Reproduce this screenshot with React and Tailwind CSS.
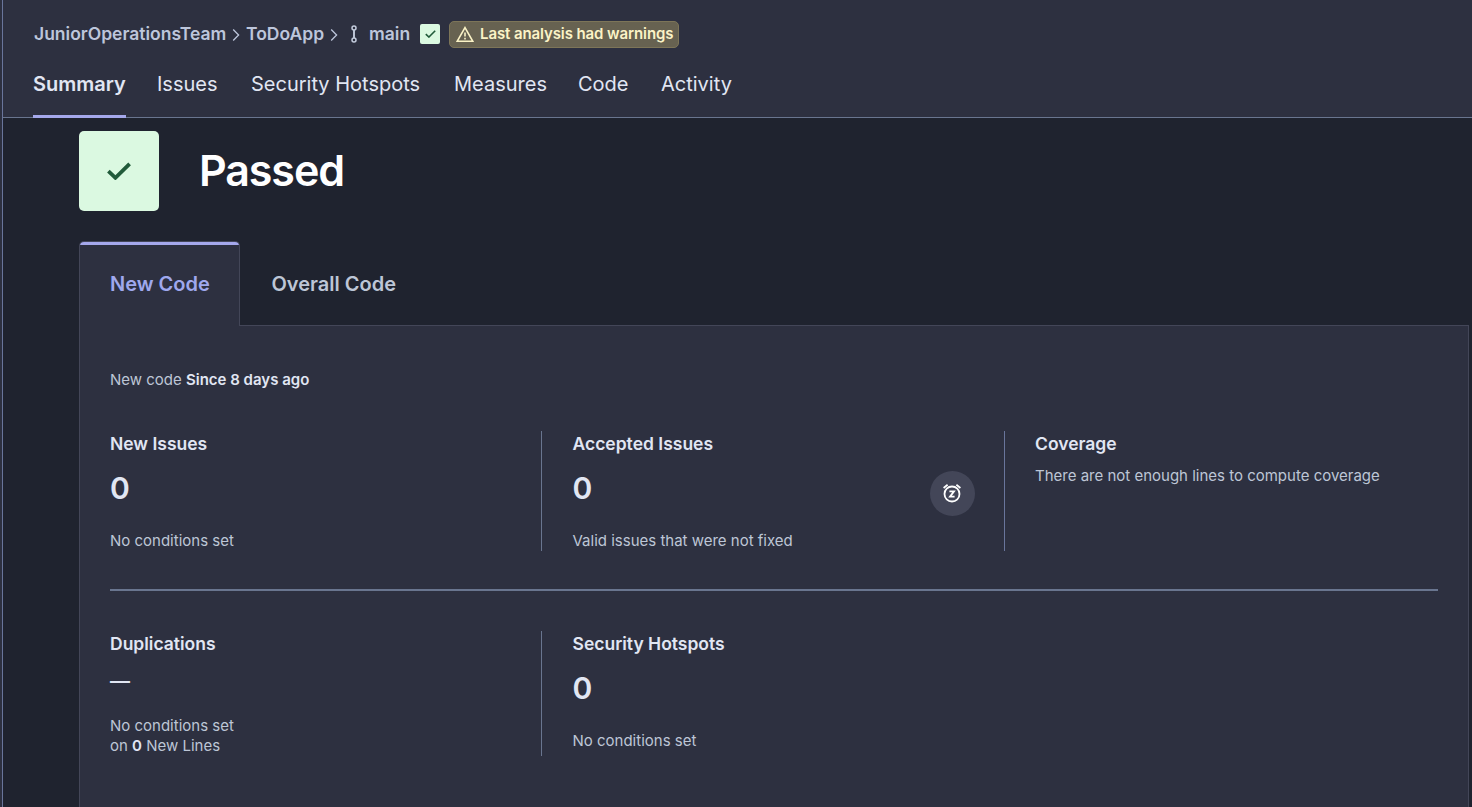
import React from "react";

const TABS = [
  { label: "Summary", cls: "w-[93px] mr-[31px] font-semibold border-[#a5a8ec]" },
  { label: "Issues", cls: "w-[61px] mr-[33px] border-transparent" },
  { label: "Security Hotspots", cls: "w-[170px] mr-[33px] border-transparent" },
  { label: "Measures", cls: "w-[93px] mr-[31px] border-transparent" },
  { label: "Code", cls: "w-[51px] mr-[32px] border-transparent" },
  { label: "Activity", cls: "w-[71px] border-transparent" },
];

function Chevron() {
  return (
    <svg className="h-[14px] w-[8px] shrink-0 mt-[2px]" viewBox="0 0 8 14" fill="none" stroke="#bdc6db" strokeWidth="1.3">
      <path d="M1.2 1.5 6.6 7 1.2 12.5" />
    </svg>
  );
}

function Branch() {
  return (
    <svg className="h-[18px] w-[8px] shrink-0" viewBox="0 0 8 18" fill="none" stroke="#c3cbdc" strokeWidth="1.5">
      <circle cx="4" cy="3" r="2" />
      <circle cx="4" cy="15" r="2" />
      <path d="M4 5v8" strokeWidth="1.9" />
    </svg>
  );
}

function Check({ className, width }) {
  return (
    <svg className={className} viewBox="0 0 24 18" fill="none" stroke="#215b3a" strokeWidth={width}>
      <path d="M1.4 9.2 8.4 15.8 22.6 1.8" />
    </svg>
  );
}

function Warning() {
  return (
    <svg className="h-[17px] w-[18px] shrink-0" viewBox="0 0 18 17" fill="none" stroke="#fbf3c6" strokeWidth="1.6">
      <path d="M9 1.7 16.7 15.2H1.3Z" />
      <path d="M9 6.6v4M9 11.8v1.6" />
    </svg>
  );
}

function Snooze() {
  return (
    <svg className="mb-px mr-px h-[20px] w-[20px]" viewBox="0 0 20 20" fill="none" stroke="#ffffff" strokeWidth="1.8">
      <circle cx="10" cy="11" r="7.5" />
      <path d="M1.6 5 5.6 1.8M18.4 5 14.4 1.8" />
      <path d="M7.4 8.4h4.6L8 13.6h4.6" />
    </svg>
  );
}

function Metric({ title, value, note }) {
  return (
    <div>
      <h3 className="text-[17.5px] leading-[25px] font-semibold">{title}</h3>
      <div className="mt-[15px] h-[35px] text-[30px] leading-[35px] font-semibold">{value}</div>
      <p className="mt-[25px] text-[15px] leading-5 text-[#bdc6d6]">{note}</p>
    </div>
  );
}

export default function App() {
  return (
    <div className="flex h-[807px] w-[1472px] overflow-hidden bg-[#1f232f] font-['Inter',sans-serif] text-[#e1e6f3]">
      <div className="w-[3px] shrink-0 border-r border-[#69759b] bg-[#2d3040]" />
      <div className="flex min-w-0 flex-1 flex-col">
        <header className="h-[118px] shrink-0 border-b border-[#69758f] bg-[#2d3040] pl-[30px]">
          <div className="flex h-[68px] items-center text-[17.5px] leading-[25px] font-semibold text-[#bdc6db]">
            <span className="-mt-[2px] w-[192px] whitespace-nowrap pl-px">JuniorOperationsTeam</span>
            <span className="ml-[7px] flex"><Chevron /></span>
            <span className="-mt-[2px] ml-[6px] w-[78px] whitespace-nowrap">ToDoApp</span>
            <span className="ml-[6px] flex"><Chevron /></span>
            <span className="ml-[12px] flex"><Branch /></span>
            <span className="-mt-[2px] ml-[11px] w-[41px]">main</span>
            <span className="ml-[10px] flex size-5 items-center justify-center rounded-[2px] bg-[#dbf9e1]">
              <Check className="h-[8px] w-[11px]" width={3.6} />
            </span>
            <span className="ml-[9px] flex h-[27px] w-[230px] items-center whitespace-nowrap rounded-[5px] border border-[#7d7558] bg-[#676251] pl-[6px] text-[15px] tracking-[-0.1px] text-[#fbf3c6]">
              <Warning />
              <span className="-mt-px ml-[6px]">Last analysis had warnings</span>
            </span>
          </div>
          <nav className="flex h-[50px] text-[20px] leading-[30px]">
            {TABS.map((t) => (
              <a key={t.label} className={"h-[50px] shrink-0 whitespace-nowrap border-b-[3px] pt-[1px] " + t.cls}>
                {t.label}
              </a>
            ))}
          </nav>
        </header>

        <main className="flex flex-1 flex-col pl-[76px] pr-[3px] pt-[13px]">
          <div className="flex h-20 items-center">
            <div className="flex size-20 items-center justify-center rounded-[5px] bg-[#dbf9e1]">
              <Check className="mb-px mr-px h-[18px] w-[24px]" width={3.8} />
            </div>
            <h1 className="-mt-[2px] ml-[40px] text-[43px] leading-[50px] font-semibold tracking-[-1.1px] text-white">Passed</h1>
          </div>

          <div className="mt-[30px] flex h-[85px] shrink-0">
            <div className="flex w-[161px] flex-col overflow-hidden rounded-t-[5px] border-x border-t border-[#434658] bg-[#2d3040]">
              <div className="h-[3px] shrink-0 bg-[#a5a8ec]" />
              <div className="flex h-[78px] items-center pl-[30px] text-[20px] font-semibold text-[#9fa8ee]">New Code</div>
            </div>
            <div className="flex flex-1 border-b border-[#434658] pl-[31.5px] pt-[28px] text-[20px] leading-[30px] font-semibold text-[#bdc6d6]">
              Overall Code
            </div>
          </div>

          <section className="flex-1 border-x border-[#434658] bg-[#2d3040] px-[30px] pt-[44px]">
            <p className="text-[15px] leading-5 text-[#bdc6d6]">
              New code <b className="font-semibold text-[#e1e6f3]">Since 8 days ago</b>
            </p>

            <div className="mt-[41px] flex h-[120px]">
              <div className="w-[432px] border-r border-[#69758f]">
                <Metric title="New Issues" value="0" note="No conditions set" />
              </div>
              <div className="flex w-[463px] justify-between border-r border-[#69759b] pl-[30.5px] pr-[29px]">
                <Metric title="Accepted Issues" value="0" note="Valid issues that were not fixed" />
                <div className="mt-[40px] flex size-[45px] items-center justify-center rounded-full bg-[#434658]">
                  <Snooze />
                </div>
              </div>
              <div className="pl-[30px]">
                <h3 className="text-[17.5px] leading-[25px] font-semibold">Coverage</h3>
                <p className="mt-[10px] text-[15px] leading-5 text-[#bdc6d6]">There are not enough lines to compute coverage</p>
              </div>
            </div>

            <div className="mt-[38px] h-[2px] bg-[#69758f]" />

            <div className="mt-[40px] flex h-[125px]">
              <div className="w-[432px] border-r border-[#69758f]">
                <h3 className="text-[17.5px] leading-[25px] font-semibold">Duplications</h3>
                <div className="mt-[15px] h-5 text-[20px] leading-5 font-medium">—</div>
                <p className="mt-[25px] text-[15px] leading-5 text-[#bdc6d6]">
                  No conditions set
                  <br />
                  on <b className="font-semibold text-[#e1e6f3]">0</b> New Lines
                </p>
              </div>
              <div className="pl-[30.5px]">
                <Metric title="Security Hotspots" value="0" note="No conditions set" />
              </div>
            </div>
          </section>
        </main>
      </div>
    </div>
  );
}
